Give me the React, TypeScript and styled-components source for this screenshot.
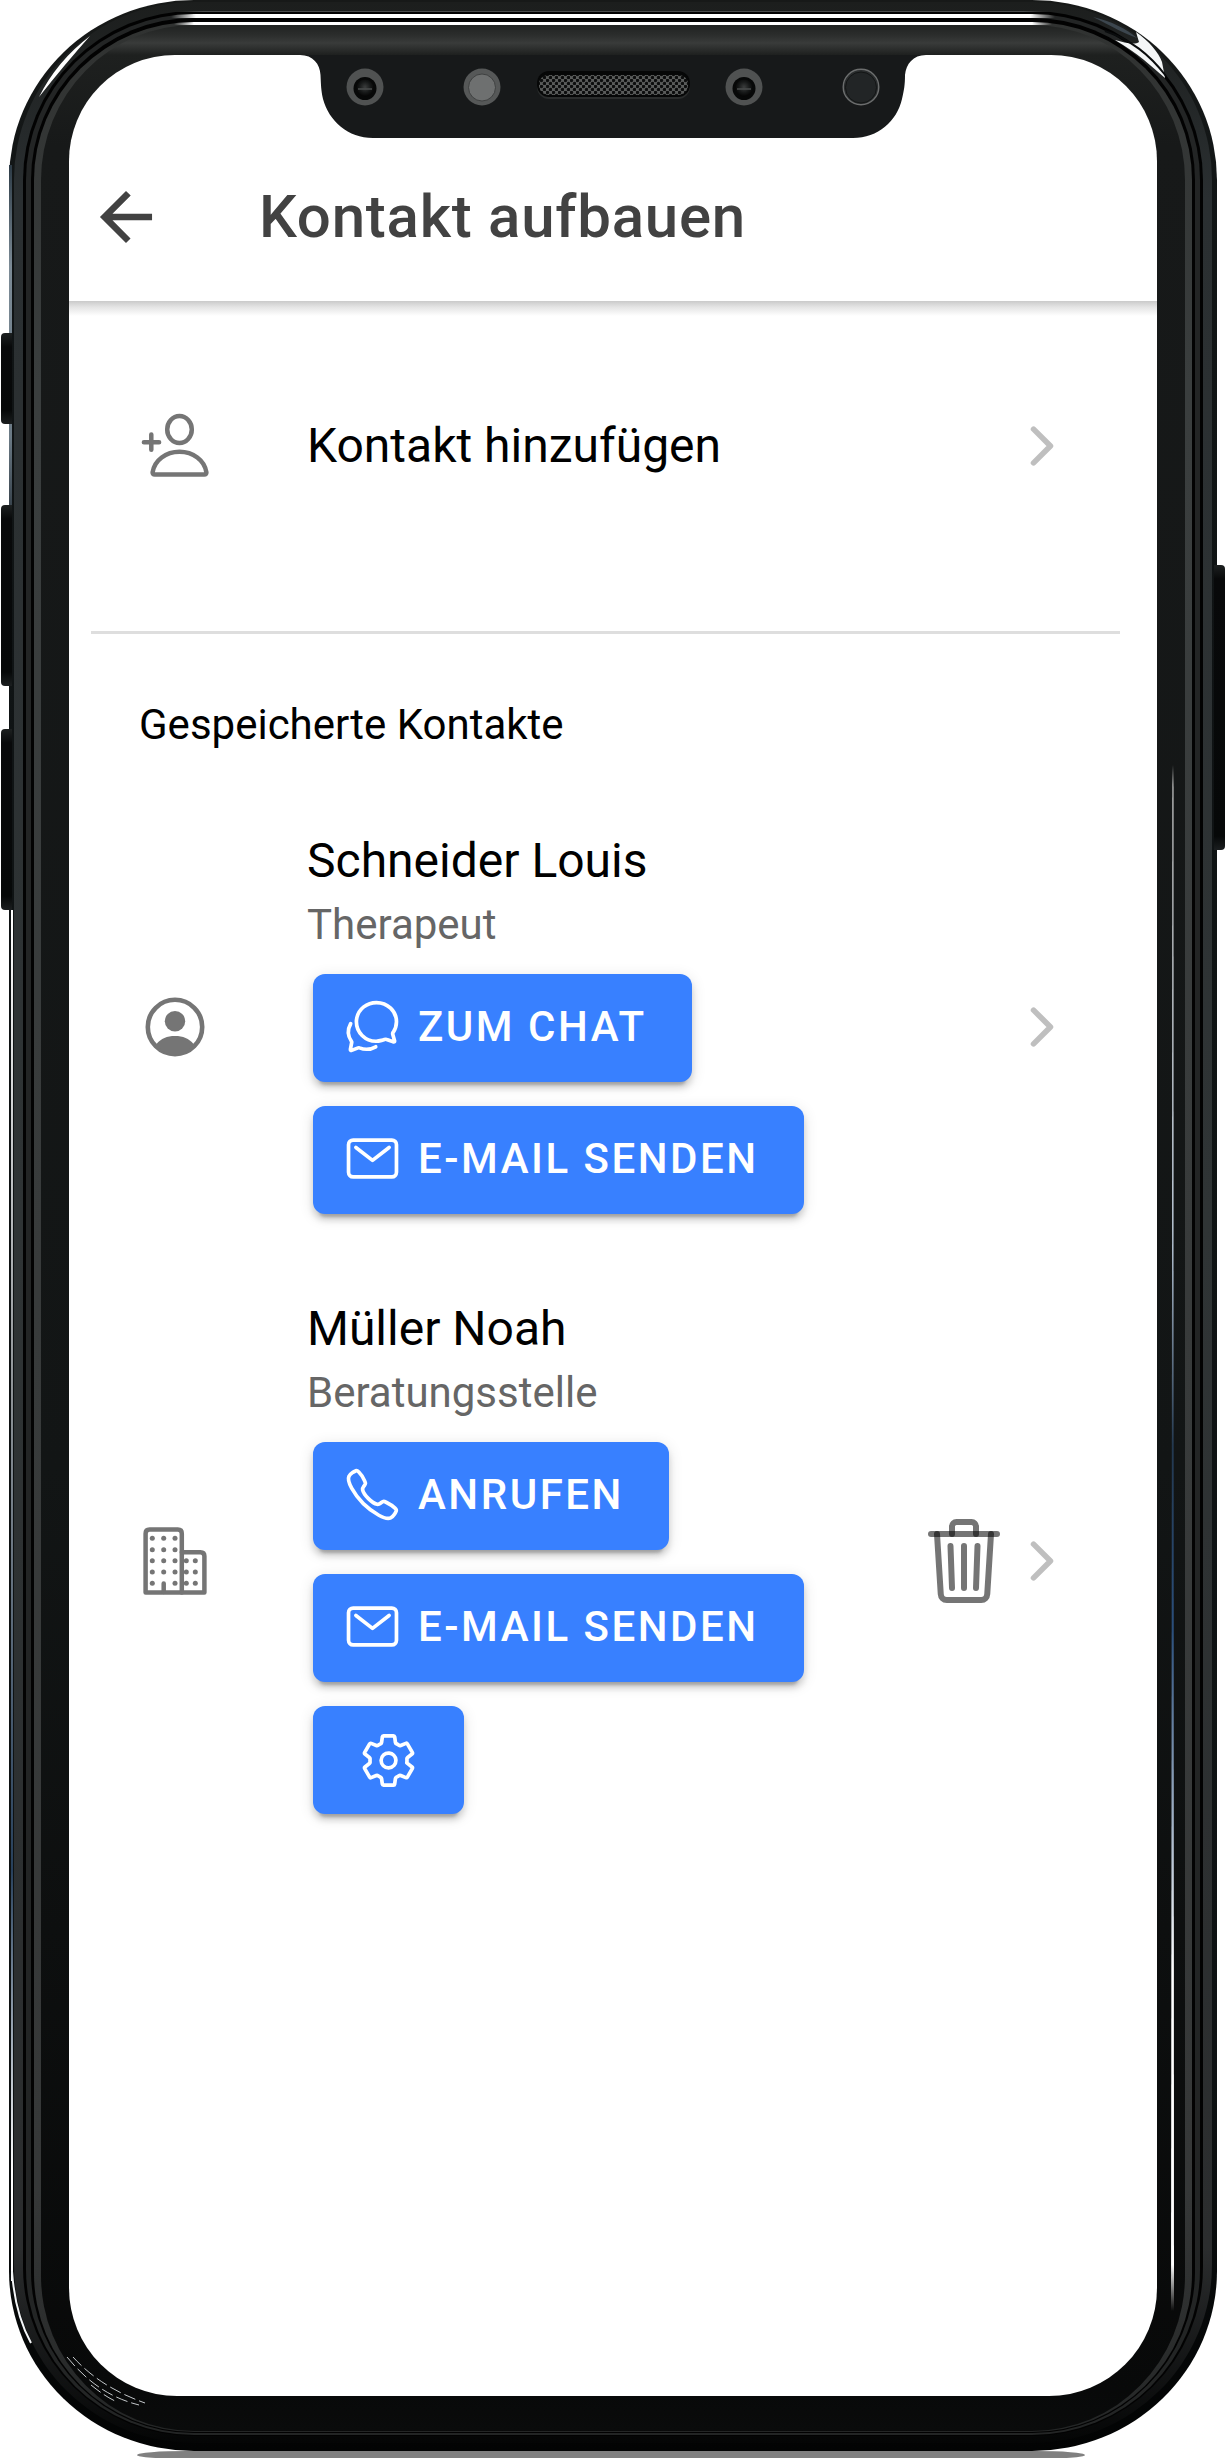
import React from 'react';
import styled, { createGlobalStyle } from 'styled-components';
import {
  IoCallOutline,
  IoChatbubblesOutline,
  IoChevronForwardOutline,
  IoMailOutline,
  IoSettingsOutline,
  IoTrashOutline,
} from 'react-icons/io5';

const GlobalStyle = createGlobalStyle`
  *, *::before, *::after { box-sizing: border-box; }
  body {
    margin: 0;
    background: #fff;
    font-family: Roboto, "Liberation Sans", sans-serif;
  }
  h1, h2, h3, p, ul { margin: 0; padding: 0; font-weight: 400; }
  ul { list-style: none; }
  button { border: 0; background: none; font: inherit; cursor: pointer; }
`;

/* ---------- Phone hardware ---------- */

const Page = styled.div`
  position: relative;
  display: flex;
  flex-direction: column;
  min-height: 100vh;
  padding: 0 9px;
`;

const Ring = styled.div<{ $pad: string; $radius: string; $fill: string }>`
  position: relative;
  display: flex;
  flex: 1;
  flex-direction: column;
  padding: ${(p) => p.$pad};
  border-radius: ${(p) => p.$radius};
  background: ${(p) => p.$fill};
`;

const GroundShadow = styled.div`
  height: 8px;
  margin: 0 132px 0 128px;
  background: linear-gradient(#808080, #808080) top / 100% 7px no-repeat;
  border-radius: 50px / 4px;
`;

const SideKey = styled.span<{ $side: 'left' | 'right'; $top: number; $length: number }>`
  position: absolute;
  ${(p) => p.$side}: 1px;
  top: ${(p) => p.$top}px;
  width: 11px;
  height: ${(p) => p.$length}px;
  border-radius: ${(p) => (p.$side === 'left' ? '4px 0 0 4px' : '0 4px 4px 0')};
  background: linear-gradient(#1d2020, #08090a 14px, #060808 calc(100% - 14px), #1b1e1f);
`;

const BezelGlint = styled.span`
  position: absolute;
  top: 740px;
  right: 11px;
  bottom: 120px;
  width: 3px;
  background: linear-gradient(transparent, #fff 20px, #b9c6d4 30%, #23384f 44%, #2b4f7c 56%, #fff 78%, #fff 97%, transparent);
  clip-path: polygon(50% 0, 80% 0, 100% 100%, 0 100%);
`;

const EdgeGlint = styled.span`
  position: absolute;
  top: 910px;
  left: 2px;
  bottom: 170px;
  width: 2px;
  background: linear-gradient(#fff, #8f9498 35%, #27405c 70%, #fff 92%);
`;

const EdgeSheen = styled.span`
  position: absolute;
  top: 165px;
  left: 0;
  width: 3px;
  height: 340px;
  background: linear-gradient(#2c3a45, #7c8b96 30%, #6b7a85 80%, #39444d);
`;

const CornerGlint = styled.svg<{ $corner: 'topLeft' | 'topRight' | 'bottomLeft' }>`
  position: absolute;
  width: 190px;
  height: 190px;
  ${(p) => (p.$corner === 'bottomLeft' ? 'bottom: 0;' : 'top: 0;')}
  ${(p) => (p.$corner === 'topRight' ? 'right: 0;' : 'left: 0;')}
  pointer-events: none;
`;

const Screen = styled.div`
  position: relative;
  display: flex;
  flex: 1;
  flex-direction: column;
  overflow: hidden;
  background: #fff;
  border-radius: 106px 106px 108px 108px;
`;

const NotchDrawing = styled.svg`
  position: absolute;
  top: 0;
  left: 50%;
  width: 626px;
  height: 84px;
  margin-left: -313px;
`;

function Notch() {
  return (
    <NotchDrawing viewBox="0 0 626 84" aria-hidden="true">
      <defs>
        <pattern id="mesh" width="6" height="6" patternUnits="userSpaceOnUse">
          <rect width="6" height="6" fill="#5a5c5b" />
          <circle cx="1.5" cy="1.5" r="1.7" fill="#0c0d0d" />
          <circle cx="4.5" cy="4.5" r="1.7" fill="#0c0d0d" />
        </pattern>
        <radialGradient id="lens" cx="50%" cy="45%" r="55%">
          <stop offset="0" stopColor="#3b3d3d" />
          <stop offset="0.6" stopColor="#161818" />
          <stop offset="1" stopColor="#050505" />
        </radialGradient>
      </defs>
      <path
        d="M0 0C13 0 20 9 20.500 20C21 30 21 35 23 44C29 66 48 83 73 83H553C578 83 597 66 602 44C604 35 605 30 605 20C606 9 613 0 626 0Z"
        fill="#17191a"
      />
      {[65, 444].map((cx) => (
        <g key={cx}>
          <circle cx={cx} cy="32" r="18.500" fill="#505252" />
          <circle cx={cx} cy="33.500" r="11.500" fill="#070808" />
          <circle cx={cx} cy="33" r="8.500" fill="url(#lens)" />
          <path d={`M${cx - 7} 34h14`} stroke="#4a4c4c" strokeWidth="1.500" />
        </g>
      ))}
      <circle cx="182" cy="32" r="18.500" fill="#565858" />
      <circle cx="182" cy="32.500" r="13.500" fill="#6e7070" stroke="#3f4141" />
      <circle cx="561" cy="32" r="17.800" fill="#2a2d2e" stroke="#6c6e6e" strokeWidth="1.400" />
      <circle cx="561" cy="32.500" r="15.500" fill="#222526" stroke="#131515" />
      <rect x="237" y="17" width="153" height="27" rx="12" fill="#2b2d2d" />
      <rect x="237" y="16" width="153" height="26" rx="12" fill="#060707" />
      <rect x="239" y="20" width="149" height="20" rx="9" fill="url(#mesh)" />
    </NotchDrawing>
  );
}

function PhoneFrame({ children }: { children: React.ReactNode }) {
  return (
    <Page>
      <Ring $pad="2px 5px 8px" $radius="185px / 180px" $fill="linear-gradient(#171918, #101415 10%, #0d1112 85%, #020303)">
        <Ring $pad="9px 9px 7px" $radius="180px / 178px" $fill="linear-gradient(#1c1e1d, #2a2f31 8%, #2f3435 50%, #2b2d2e 92%, #040505)">
          <Ring $pad="3px 3px 1px" $radius="171px / 169px" $fill="linear-gradient(90deg, #000 140px, #4b4d4d 180px, #4b4d4d calc(100% - 180px), #000 calc(100% - 140px)) top / 100% 1px no-repeat, #020202">
            <Ring $pad="4px 5px 2px" $radius="168px / 166px" $fill="linear-gradient(90deg, #232525 145px, #fff 170px, #fff calc(100% - 170px), #232525 calc(100% - 145px)) top / 100% 4px no-repeat, #232525">
              <Ring $pad="4px 3px 1px" $radius="163px / 162px" $fill="#020202">
                <Ring $pad="3px 7px 1px" $radius="160px / 158px" $fill="linear-gradient(90deg, transparent 140px, #fff 160px, #fff calc(100% - 160px), transparent calc(100% - 140px)) top / 100% 3px no-repeat, linear-gradient(#303231, #3a3e3e 15%, #363838 90%, #242626)">
                  <Ring $pad="30px 28px 35px" $radius="153px / 155px" $fill="linear-gradient(#202221, #2b2d2c 10px, #393b3a 18px, #1e201f 30px, #171919 120px, #121515 60%, #080909 calc(100% - 40px), #0a0b0b)">
                    <Screen>
                      <Notch />
                      {children}
                    </Screen>
                    <BezelGlint />
                  </Ring>
                </Ring>
              </Ring>
            </Ring>
          </Ring>
        </Ring>
        <EdgeSheen />
        <EdgeGlint />
        <CornerGlint $corner="topLeft" viewBox="0 0 190 190" aria-hidden="true">
          <path d="M30 97Q48 61 81 36Q56 64 30 97Z" fill="#fff" />
        </CornerGlint>
        <CornerGlint $corner="topRight" viewBox="0 0 190 190" aria-hidden="true">
          <path d="M66 17C84 21 100 29 110 38C98 34 84 26 66 17Z" fill="#3c464e" />
          <path d="M109 32C122 41 132 53 135 62L138 78C124 66 112 54 88 40C98 43 108 45 112 42Z" fill="#f4f6f7" />
          <path d="M78 31C104 40 122 54 139 76" fill="none" stroke="#0a0c0d" strokeWidth="2" />
        </CornerGlint>
        <CornerGlint $corner="bottomLeft" viewBox="0 0 190 190" aria-hidden="true">
          <path d="M58 96C76 118 98 136 130 144M64 96C84 118 108 132 136 142M82 124C92 132 98 136 106 140" fill="none" stroke="#c4c8cb" strokeWidth="1" strokeDasharray="12 4" />
          <path d="M3 10C5 40 11 62 22 82" fill="none" stroke="#f3f5f7" strokeWidth="2" />
        </CornerGlint>
      </Ring>
      <GroundShadow />
      <SideKey $side="left" $top={333} $length={91} />
      <SideKey $side="left" $top={505} $length={181} />
      <SideKey $side="left" $top={729} $length={181} />
      <SideKey $side="right" $top={565} $length={285} />
    </Page>
  );
}

/* ---------- Icons ---------- */

const ItemIcon = styled.svg`
  flex: none;
  width: 72px;
  height: 72px;
  margin-right: 96px;
  color: #757575;
`;

function PersonAddIcon() {
  return (
    <ItemIcon viewBox="0 0 72 72" fill="none" stroke="currentColor" strokeWidth="4.500" strokeLinecap="round" strokeLinejoin="round" aria-hidden="true">
      <ellipse cx="40.500" cy="19.500" rx="12.300" ry="13.500" />
      <path d="M13.600 62.300C15.500 50 27 41.800 40.500 41.800S65.500 50 67.400 62.300Q67.500 64.600 65.300 64.600H15.700Q13.500 64.600 13.600 62.300Z" />
      <path d="M4.900 32.200H20.100M12.300 24.400V39.800" />
    </ItemIcon>
  );
}

function PersonCircleIcon() {
  return (
    <ItemIcon viewBox="0 0 72 72" aria-hidden="true">
      <circle cx="36" cy="36" r="27.200" fill="none" stroke="currentColor" strokeWidth="4.600" />
      <circle cx="36" cy="30.300" r="10.200" fill="currentColor" />
      <path d="M17.500 53C22 47.500 28 45 36 45S50 47.500 54.500 53C50 60 44 64 36 64S22 60 17.500 53Z" fill="currentColor" />
    </ItemIcon>
  );
}

function BuildingIcon() {
  const rows = [13.3, 24.7, 35.7, 47, 58.3];
  return (
    <ItemIcon viewBox="0 0 72 72" aria-hidden="true">
      <g fill="none" stroke="currentColor" strokeWidth="4.500" strokeLinecap="round" strokeLinejoin="round">
        <path d="M6.600 67.500V8.600Q6.600 4.600 10.600 4.600H38.800Q42.800 4.600 42.800 8.600V67.500Z" />
        <path d="M42.800 27.200H61.400Q65.400 27.200 65.400 31.200V67.500H42.800M24.700 58.500V67" />
      </g>
      <g fill="currentColor">
        {rows.map((y, row) =>
          [13.3, 24.7, 36]
            .filter((x) => !(row === 4 && x === 24.7))
            .map((x) => <circle key={`${x}-${y}`} cx={x} cy={y} r="2.500" />),
        )}
        {rows.slice(2).map((y) => [47.3, 56.3].map((x) => <circle key={`${x}-${y}`} cx={x} cy={y} r="2.500" />))}
      </g>
    </ItemIcon>
  );
}

const Chevron = styled(IoChevronForwardOutline)`
  display: block;
  flex: none;
  width: 60px;
  height: 60px;
  color: #bfbfbf;

  path { stroke-width: 48px; }
`;

/* ---------- App screen ---------- */

const Toolbar = styled.header`
  display: flex;
  align-items: center;
  height: 246px;
  padding: 78px 18px 0;
`;

const BackButton = styled.button`
  display: flex;
  width: 78px;
  height: 78px;
  margin-right: 94px;
  padding: 0;
  color: #424242;
`;

const Title = styled.h1`
  color: #424242;
  font-size: 60px;
  font-weight: 500;
  line-height: 72px;
  letter-spacing: 0.0125em;
`;

const ToolbarShadow = styled.div`
  height: 15px;
  background: linear-gradient(#cacaca, #e4e4e4 40%, #fff);
`;

const Content = styled.main`
  flex: 1;
  margin: 0 37px 0 22px;
`;

const AddSection = styled.section`
  padding: 57px 0 113px;
  border-bottom: 3px solid #dedede;
`;

const AddLink = styled.a`
  display: flex;
  align-items: center;
  min-height: 145px;
  padding: 0 48px;
  color: #000;
  text-decoration: none;
`;

const ItemBody = styled.div`
  flex: 1;
`;

const ItemTitle = styled.h3`
  color: #000;
  font-size: 48px;
  line-height: 60px;
`;

const ItemNote = styled.p`
  margin-top: 7px;
  color: #666;
  font-size: 42px;
  line-height: 54px;
`;

const SectionTitle = styled.h2`
  margin: 64px 48px 79px;
  color: #000;
  font-size: 42px;
  line-height: 54px;
`;

const ContactList = styled.ul`
  display: flex;
  flex-direction: column;
  gap: 76px;
`;

const Contact = styled.li`
  display: flex;
  align-items: center;
  padding: 0 48px;
`;

const Actions = styled.div`
  display: flex;
  flex-direction: column;
  align-items: flex-start;
  gap: 24px;
  padding: 22px 0 9px 6px;
`;

const ActionButton = styled.button<{ $iconOnly?: boolean }>`
  display: flex;
  align-items: center;
  gap: 16px;
  height: 108px;
  padding: ${(p) => (p.$iconOnly ? '0 46px' : '0 45px 3px 30px')};
  border-radius: 12px;
  background: #3880ff;
  box-shadow:
    0 9px 3px -6px rgba(0, 0, 0, 0.2),
    0 6px 6px 0 rgba(0, 0, 0, 0.14),
    0 3px 15px 0 rgba(0, 0, 0, 0.12);
  color: #fff;
  font-size: 42px;
  font-weight: 500;
  letter-spacing: 0.06em;
  text-transform: uppercase;
  white-space: nowrap;

  svg { flex: none; width: 59px; height: 59px; }
`;

const DeleteButton = styled.button`
  display: flex;
  flex: none;
  padding: 0;
  color: rgba(0, 0, 0, 0.54);

  svg { width: 96px; height: 96px; }
`;

export default function App() {
  return (
    <>
      <GlobalStyle />
      <PhoneFrame>
        <Toolbar>
          <BackButton type="button" aria-label="Zurück">
            <svg viewBox="0 0 512 512" fill="currentColor" aria-hidden="true">
              <path d="M427 234.625H167.296l119.702-119.702L256 85 85 256l171 171 29.922-29.924-118.626-119.701H427v-42.750z" />
            </svg>
          </BackButton>
          <Title>Kontakt aufbauen</Title>
        </Toolbar>
        <ToolbarShadow />
        <Content>
          <AddSection>
            <AddLink href="#hinzufuegen">
              <PersonAddIcon />
              <ItemBody>
                <ItemTitle>Kontakt hinzufügen</ItemTitle>
              </ItemBody>
              <Chevron aria-hidden="true" />
            </AddLink>
          </AddSection>
          <SectionTitle>Gespeicherte Kontakte</SectionTitle>
          <ContactList>
            <Contact>
              <PersonCircleIcon />
              <ItemBody>
                <ItemTitle>Schneider Louis</ItemTitle>
                <ItemNote>Therapeut</ItemNote>
                <Actions>
                  <ActionButton type="button">
                    <IoChatbubblesOutline aria-hidden="true" />
                    Zum Chat
                  </ActionButton>
                  <ActionButton type="button">
                    <IoMailOutline aria-hidden="true" />
                    E-Mail senden
                  </ActionButton>
                </Actions>
              </ItemBody>
              <a href="#schneider-louis" aria-label="Schneider Louis öffnen">
                <Chevron aria-hidden="true" />
              </a>
            </Contact>
            <Contact>
              <BuildingIcon />
              <ItemBody>
                <ItemTitle>Müller Noah</ItemTitle>
                <ItemNote>Beratungsstelle</ItemNote>
                <Actions>
                  <ActionButton type="button">
                    <IoCallOutline aria-hidden="true" />
                    Anrufen
                  </ActionButton>
                  <ActionButton type="button">
                    <IoMailOutline aria-hidden="true" />
                    E-Mail senden
                  </ActionButton>
                  <ActionButton type="button" $iconOnly aria-label="Einstellungen">
                    <IoSettingsOutline aria-hidden="true" />
                  </ActionButton>
                </Actions>
              </ItemBody>
              <DeleteButton type="button" aria-label="Müller Noah löschen">
                <IoTrashOutline aria-hidden="true" />
              </DeleteButton>
              <a href="#mueller-noah" aria-label="Müller Noah öffnen">
                <Chevron aria-hidden="true" />
              </a>
            </Contact>
          </ContactList>
        </Content>
      </PhoneFrame>
    </>
  );
}
